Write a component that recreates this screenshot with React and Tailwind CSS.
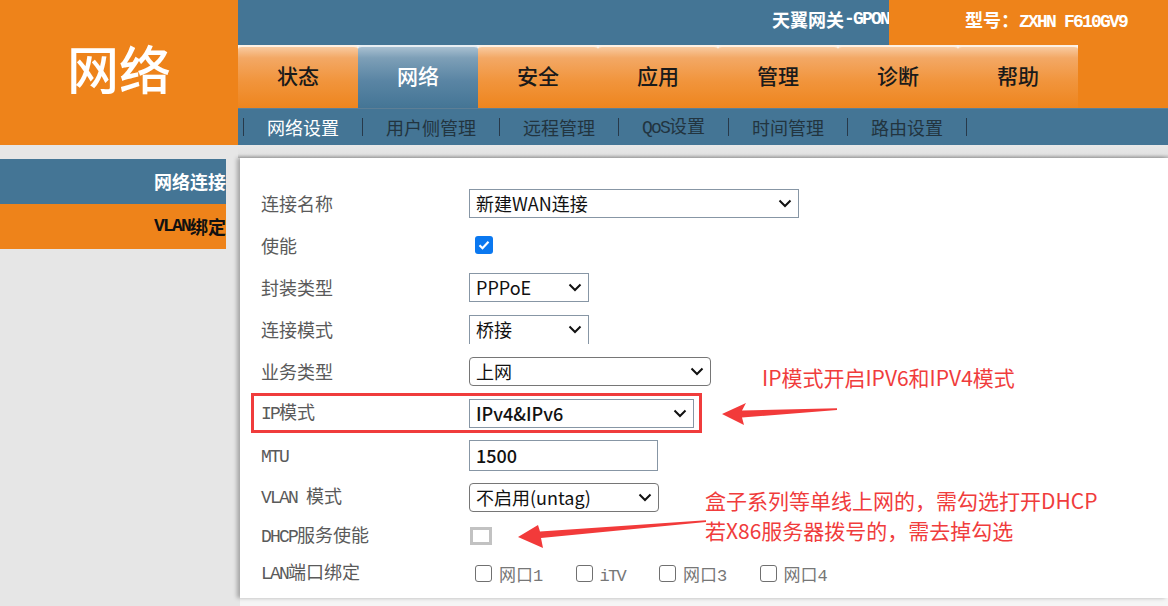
import React from "react";

const tabs = ["状态", "网络", "安全", "应用", "管理", "诊断", "帮助"];
const subs = ["网络设置", "用户侧管理", "远程管理", "QoS设置", "时间管理", "路由设置"];

// SimSun style: latin glyphs are half width, so squeeze the mono font
function Mix({ text }) {
    return text.split(/([\x20-\x7e]+)/).map((p, i) =>
        /^[\x20-\x7e]+$/.test(p) ? (
            <span key={i} className="font-['Liberation_Mono'] text-[1em] tracking-[-0.1em] whitespace-pre">
                {p}
            </span>
        ) : (
            <span key={i}>{p}</span>
        )
    );
}

function Chevron() {
    return (
        <svg width="14" height="9" viewBox="0 0 14 9" className="shrink-0">
            <path d="M1.5 1.5l5.5 5.5 5.5-5.5" fill="none" stroke="#111" strokeWidth="2" />
        </svg>
    );
}

function Select({ value, width, rounded, bold, open }) {
    return (
        <div
            className={
                "flex items-center justify-between h-[29px] pl-[6px] pr-[6px] border border-[#8796a5] bg-white " +
                (rounded ? "rounded-[4px] h-[27px] border-[#767676] " : "") +
                (open ? "border-b-0 " : "")
            }
            style={{ width }}
        >
            <span className={"text-[18px] text-[#111] " + (bold ? "font-medium" : "")}>{value}</span>
            <Chevron />
        </div>
    );
}

function Row({ label, h, children }) {
    return (
        <div className="flex items-center" style={{ height: h }}>
            <div className="w-[208px] shrink-0 text-[18px] text-[#5a5a5a]">
                <Mix text={label} />
            </div>
            {children}
        </div>
    );
}

function LanBox({ label }) {
    return (
        <div className="flex items-center mr-[34px]">
            <div className="w-[17px] h-[17px] rounded-[3px] border border-[#707070] bg-white"></div>
            <span className="ml-[7px] text-[17px] text-[#777] mt-[4px]">
                <Mix text={label} />
            </span>
        </div>
    );
}

export default function App() {
    return (
        <div className="relative w-[1168px] h-[606px] overflow-hidden flex bg-[#e6e6e6] font-['Noto_Sans_CJK_SC',sans-serif]">
            {/* left column */}
            <div className="w-[238px] shrink-0 flex flex-col">
                <div className="h-[145px] bg-[#ee831a] flex justify-center pt-[40px]">
                    <span className="text-[52px] leading-[56px] text-white font-medium">网络</span>
                </div>
                <div className="pt-[14px]">
                    <div className="w-[226px] h-[45px] bg-[#447595] flex items-center justify-end text-[18px] font-bold text-white">
                        网络连接
                    </div>
                    <div className="w-[226px] h-[45px] bg-[#ee831a] flex items-center justify-end text-[18px] font-bold text-[#111]">
                        <Mix text="VLAN绑定" />
                    </div>
                </div>
            </div>

            {/* right column */}
            <div className="flex-1 flex flex-col">
                <div className="h-[45px] flex">
                    <div className="flex-1 bg-[#447595] flex justify-end pt-[8px] text-[18px] leading-[22px] font-bold text-white">
                        <Mix text="天翼网关-GPON" />
                    </div>
                    <div className="w-[279px] bg-[#ee831a] pl-[76px] pt-[8px] text-[18px] leading-[22px] font-bold text-white">
                        <Mix text="型号：ZXHN F610GV9" />
                    </div>
                </div>

                <div className="h-[63px] flex">
                    <div className="flex bg-[#f6f6f6]">
                        {tabs.map((t, i) =>
                            i === 1 ? (
                                <div
                                    key={t}
                                    className="w-[120px] pb-[3px] rounded-t-[4px] border-t-2 border-[#e8eef3] bg-[linear-gradient(#a9c0d1_0%,#7d9fb7_18%,#5a85a4_55%,#447595_100%)] flex items-center justify-center text-[21px] font-medium text-white"
                                >
                                    {t}
                                </div>
                            ) : (
                                <div
                                    key={t}
                                    className="w-[120px] pb-[3px] rounded-t-[4px] border-t-2 border-[#fdf1e4] bg-[linear-gradient(#f8caa0_0%,#f3a865_18%,#f1953d_55%,#ee851e_100%)] flex items-center justify-center text-[21px] font-medium text-[#1a1a1a]"
                                >
                                    {t}
                                </div>
                            )
                        )}
                    </div>
                    <div className="flex-1 bg-[#ee831a]"></div>
                </div>

                <div className="h-[37px] bg-[#447595] flex items-center pl-[5px] border-t border-[#5d7f96]">
                    <div className="w-px h-[18px] bg-[#27394a]"></div>
                    {subs.map((s, i) => (
                        <React.Fragment key={s}>
                            <span className={"px-[23px] text-[18px] " + (i === 0 ? "text-white" : "text-[#22343f]")}>
                                <Mix text={s} />
                            </span>
                            <div className="w-px h-[18px] bg-[#27394a]"></div>
                        </React.Fragment>
                    ))}
                </div>

                <div className="h-[13px] bg-[linear-gradient(#e8e8e8_0%,#e2e2e2_70%,#b8b8b8_100%)]"></div>

                <div className="relative flex-1 ml-[2px] bg-white shadow-[-3px_0_4px_rgba(0,0,0,0.28)] pt-[24px] pl-[21px]">
                    <Row label="连接名称" h={42}>
                        <Select value="新建WAN连接" width={330} />
                    </Row>
                    <Row label="使能" h={42}>
                        <div className="ml-[6px] w-[18px] h-[18px] rounded-[3px] bg-[#0a78f0] flex items-center justify-center">
                            <svg width="12" height="10" viewBox="0 0 12 10">
                                <path d="M1.5 5.2l3 3 6-6.5" fill="none" stroke="#fff" strokeWidth="2.2" />
                            </svg>
                        </div>
                    </Row>
                    <Row label="封装类型" h={42}>
                        <Select value="PPPoE" width={120} />
                    </Row>
                    <Row label="连接模式" h={42}>
                        <Select value="桥接" width={120} open />
                    </Row>
                    <Row label="业务类型" h={42}>
                        <Select value="上网" width={242} rounded />
                    </Row>
                    <Row label="IP模式" h={42}>
                        <Select value="IPv4&IPv6" width={225} bold />
                    </Row>
                    <Row label="MTU" h={43}>
                        <div className="w-[189px] h-[31px] border border-[#8796a5] flex items-center pl-[6px] text-[18px] font-medium text-[#111]">
                            1500
                        </div>
                    </Row>
                    <Row label="VLAN 模式" h={40}>
                        <Select value="不启用(untag)" width={190} rounded />
                    </Row>
                    <Row label="DHCP服务使能" h={37}>
                        <div className="ml-[1px] w-[22px] h-[18px] border-[3px] border-[#c2c2c2] bg-white"></div>
                    </Row>
                    <Row label="LAN端口绑定" h={38}>
                        <div className="flex items-center ml-[6px]">
                            <LanBox label="网口1" />
                            <LanBox label="iTV" />
                            <LanBox label="网口3" />
                            <LanBox label="网口4" />
                        </div>
                    </Row>

                    {/* red highlight round the IP row */}
                    <div className="absolute left-[11px] top-[235px] w-[451px] h-[40px] border-[3px] border-[#f03c3c]"></div>
                </div>
                <div className="h-[8px] ml-[2px] bg-[#f5f5f5]"></div>
            </div>

            {/* annotations */}
            <div className="absolute left-[762px] top-[364px] text-[21px] leading-[26px] text-[#f03c3c] whitespace-nowrap">
                IP模式开启IPV6和IPV4模式
            </div>
            <div className="absolute left-[705px] top-[485px] text-[21px] leading-[30px] text-[#f03c3c] whitespace-nowrap">
                <div>盒子系列等单线上网的，需勾选打开DHCP</div>
                <div>若X86服务器拨号的，需去掉勾选</div>
            </div>
            <svg className="absolute left-0 top-0 pointer-events-none" width="1168" height="606">
                <polygon
                    points="722,414 746,403 742,410.5 837,408.3 837,410 742,417.5 744,425"
                    fill="#f23a3a"
                />
                <polygon
                    points="518,537 538,525 540,531.5 706,520.3 706,522 541,538 543,548"
                    fill="#f23a3a"
                />
            </svg>
        </div>
    );
}
